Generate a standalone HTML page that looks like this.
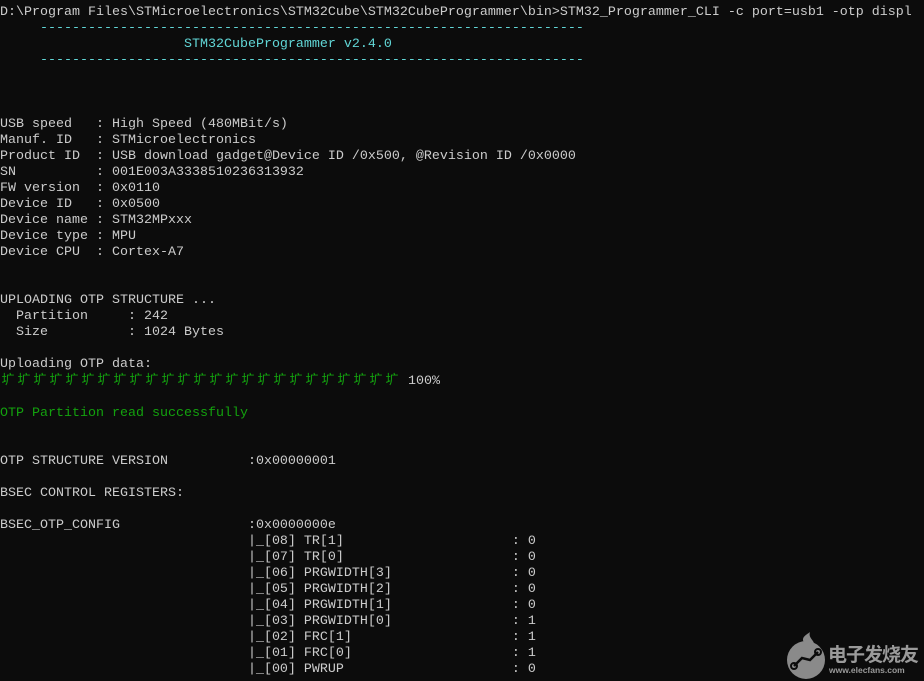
<!DOCTYPE html>
<html><head><meta charset="utf-8"><style>
html,body{margin:0;padding:0;background:#0c0c0c;width:924px;height:681px;overflow:hidden}
pre{margin:0;position:absolute;left:0;top:5px;font-family:"Liberation Mono","Noto Sans CJK SC",monospace;font-size:13.33px;line-height:16px;color:#cccccc;white-space:pre}
.c{color:#61d6d6}.g{color:#13a10e}
.pb{display:inline-block;width:16px;text-align:center;font-size:13px}
.logo{position:absolute;left:784px;top:630px;width:140px;height:51px}
</style></head><body>
<pre>D:\Program Files\STMicroelectronics\STM32Cube\STM32CubeProgrammer\bin>STM32_Programmer_CLI -c port=usb1 -otp displ
<span class="c">     --------------------------------------------------------------------</span>
<span class="c">                       STM32CubeProgrammer v2.4.0</span>
<span class="c">     --------------------------------------------------------------------</span>



USB speed   : High Speed (480MBit/s)
Manuf. ID   : STMicroelectronics
Product ID  : USB download gadget@Device ID /0x500, @Revision ID /0x0000
SN          : 001E003A3338510236313932
FW version  : 0x0110
Device ID   : 0x0500
Device name : STM32MPxxx
Device type : MPU
Device CPU  : Cortex-A7


UPLOADING OTP STRUCTURE ...
  Partition     : 242
  Size          : 1024 Bytes

Uploading OTP data:
<span class="g"><span class="pb">圹</span><span class="pb">圹</span><span class="pb">圹</span><span class="pb">圹</span><span class="pb">圹</span><span class="pb">圹</span><span class="pb">圹</span><span class="pb">圹</span><span class="pb">圹</span><span class="pb">圹</span><span class="pb">圹</span><span class="pb">圹</span><span class="pb">圹</span><span class="pb">圹</span><span class="pb">圹</span><span class="pb">圹</span><span class="pb">圹</span><span class="pb">圹</span><span class="pb">圹</span><span class="pb">圹</span><span class="pb">圹</span><span class="pb">圹</span><span class="pb">圹</span><span class="pb">圹</span><span class="pb">圹</span></span> 100%

<span class="g">OTP Partition read successfully</span>


OTP STRUCTURE VERSION          :0x00000001

BSEC CONTROL REGISTERS:

BSEC_OTP_CONFIG                :0x0000000e
                               |_[08] TR[1]                     : 0
                               |_[07] TR[0]                     : 0
                               |_[06] PRGWIDTH[3]               : 0
                               |_[05] PRGWIDTH[2]               : 0
                               |_[04] PRGWIDTH[1]               : 0
                               |_[03] PRGWIDTH[0]               : 1
                               |_[02] FRC[1]                    : 1
                               |_[01] FRC[0]                    : 1
                               |_[00] PWRUP                     : 0
</pre>
<div class="logo">
<svg width="44" height="50" viewBox="0 0 44 50" style="position:absolute;left:0;top:0">
<path d="M22 14 C14 8 24 4 26 2 C24 8 30 10 30 14 Z" fill="#8a8a8a"/>
<circle cx="22" cy="30" r="19" fill="#8a8a8a"/>
<path d="M10 36 L18 28 L26 30 L34 22" stroke="#0c0c0c" stroke-width="2.5" fill="none"/>
<circle cx="10" cy="36" r="3" fill="none" stroke="#0c0c0c" stroke-width="2"/>
<circle cx="34" cy="22" r="3" fill="none" stroke="#0c0c0c" stroke-width="2"/>
</svg>
<div style="position:absolute;left:44px;top:14px;font-family:'Noto Sans CJK SC',sans-serif;font-weight:bold;font-size:19px;line-height:20px;color:#9a9a9a;letter-spacing:-1px">电子发烧友</div>
<div style="position:absolute;left:45px;top:35px;font-family:'Liberation Sans',sans-serif;font-weight:bold;font-size:8.5px;color:#9a9a9a">www.elecfans.com</div>
</div>
</body></html>
